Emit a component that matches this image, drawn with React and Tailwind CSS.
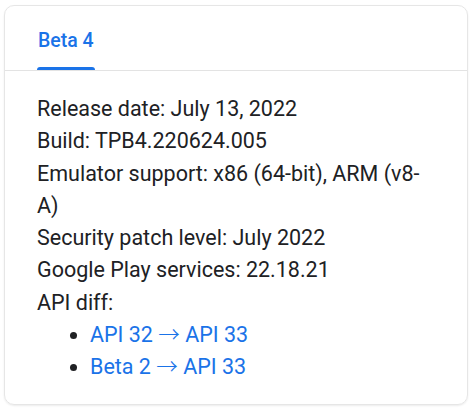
export default function App() {
  return (
    <div className="w-[474px] h-[411px] bg-white p-[4px] pt-[5px] font-['Roboto',sans-serif]">
      <div className="w-[464px] h-[400px] rounded-[10px] border border-[#e6e6e6] shadow-[0_1px_2px_rgba(0,0,0,0.08)] overflow-hidden">
        <div className="h-[65px] border-b border-[#e3e3e3] pl-[32px] flex items-end">
          <div className="flex flex-col items-stretch">
            <span className="text-[19.5px] font-medium text-[#1a73e8] leading-[24px] pb-[14px] px-[1px]">Beta 4</span>
            <div className="h-[3px] bg-[#1a73e8] rounded-t-[3px]" />
          </div>
        </div>
        <div className="pl-[32px] pr-[32px] pt-[22px] text-[21.5px] leading-[32.3px] text-[#202124]">
          <p>Release date: July 13, 2022</p>
          <p>Build: TPB4.220624.005</p>
          <p>Emulator support: x86 (64-bit), ARM (v8-A)</p>
          <p>Security patch level: July 2022</p>
          <p>Google Play services: 22.18.21</p>
          <p>API diff:</p>
          <ul className="list-disc pl-[53px] marker:text-[#202124]">
            <li><a className="text-[#1a73e8]">API 32 <span className="font-['Noto_Sans_CJK_JP',sans-serif] font-light leading-[0]">→</span> API 33</a></li>
            <li><a className="text-[#1a73e8]">Beta 2 <span className="font-['Noto_Sans_CJK_JP',sans-serif] font-light leading-[0]">→</span> API 33</a></li>
          </ul>
        </div>
      </div>
    </div>
  );
}
